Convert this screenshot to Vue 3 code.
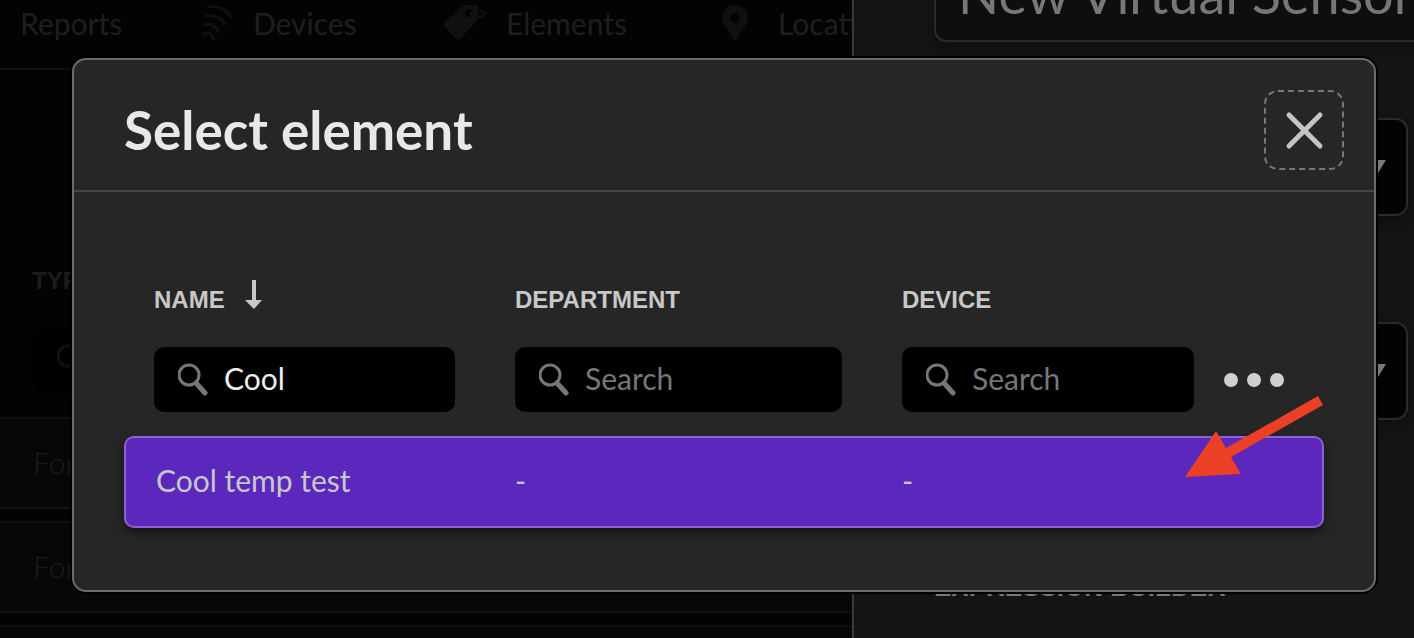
<script setup>
import { ref } from 'vue'

const filters = ref({ name: 'Cool', department: '', device: '' })
const columns = [
  { key: 'name', label: 'NAME', sorted: true },
  { key: 'department', label: 'DEPARTMENT' },
  { key: 'device', label: 'DEVICE' },
]
const rows = [{ name: 'Cool temp test', department: '-', device: '-' }]
const sensorName = ref('New Virtual Sensor')
const typeFilter = ref('')
</script>

<template>
  <div class="screen">
    <main class="main">
      <nav class="nav">
        <a href="#" class="reports">Reports</a>
        <a href="#" class="devices">
          <svg width="32" height="38" viewBox="0 0 32 38" fill="none" stroke="currentColor" stroke-width="3">
            <path d="M6 3c10-2 20 2 24 11M4 12c9-2 17 2 20 9M2 21c7-2 14 1 16 8M2 31c5-4 11-1 10 5" />
          </svg>
          Devices
        </a>
        <a href="#" class="elements">
          <svg width="42" height="36" viewBox="0 0 42 36">
            <path fill="currentColor" fill-rule="evenodd" d="M18 1.500Q20 0 22 0h10q2 0 2 2v11q0 2-2 4L17 33q-3 2-6 0L1 22q-2-3 0-5zM25 4a4 4 0 1 0 0 8a4 4 0 0 0 0-8z" />
            <ellipse cx="34" cy="9" rx="7" ry="3" fill="none" stroke="currentColor" stroke-width="2" />
          </svg>
          Elements
        </a>
        <a href="#" class="locations">
          <svg width="26" height="38" viewBox="0 0 26 38">
            <path fill="currentColor" fill-rule="evenodd" d="M13 1C6 1 0 6 0 13c0 8 7 13 11 22q2 4 4 0c4-9 11-14 11-22C26 6 20 1 13 1zm0 8a5 5 0 1 1 0 10a5 5 0 0 1 0-10z" />
          </svg>
          Locations
        </a>
      </nav>
      <section class="list">
        <label class="heading" for="type-filter">TYPE</label>
        <div class="search">
          <svg width="30" height="33" viewBox="0 0 30 33" fill="none" stroke="currentColor">
            <circle cx="11" cy="12" r="10" stroke-width="3" />
            <path d="M18 20l9 10" stroke-width="5" stroke-linecap="round" />
          </svg>
          <input id="type-filter" v-model="typeFilter" type="text" />
        </div>
        <ul>
          <li>Form</li>
          <li>Form</li>
          <li></li>
        </ul>
      </section>
    </main>

    <aside class="drawer">
      <input v-model="sensorName" class="sensor-name" type="text" aria-label="Sensor name" />
      <div v-for="n in 2" :key="n" class="picker">
        <select :aria-label="'Option ' + n"><option></option></select>
        <svg width="22" height="18" viewBox="0 0 22 18"><path d="M0 0h22L11 18z" fill="currentColor" /></svg>
      </div>
      <h2 class="heading">EXPRESSION BUILDER</h2>
    </aside>

    <div class="overlay">
      <section class="modal" role="dialog" aria-labelledby="dialog-title">
        <header>
          <h1 id="dialog-title">Select element</h1>
          <button class="close" type="button" aria-label="Close">
            <svg width="40" height="40" viewBox="0 0 40 40" fill="none" stroke="currentColor" stroke-width="5" stroke-linecap="round">
              <path d="M5 5l31 31M36 5L5 36" />
            </svg>
          </button>
        </header>
        <div class="content">
          <table>
            <colgroup>
              <col class="col-name" /><col class="col-department" /><col class="col-device" /><col class="col-more" />
            </colgroup>
            <thead>
              <tr>
                <th v-for="column in columns" :key="column.key" scope="col">
                  <label class="heading" :for="'filter-' + column.key">
                    {{ column.label }}
                    <svg v-if="column.sorted" class="sort" width="18" height="30" viewBox="0 0 18 30" fill="currentColor">
                      <path d="M7 0h4v20h6L9 29 0 20h7z" />
                    </svg>
                  </label>
                  <div class="search">
                    <svg width="30" height="33" viewBox="0 0 30 33" fill="none" stroke="currentColor">
                      <circle cx="11" cy="12" r="10" stroke-width="3" />
                      <path d="M18 20l9 10" stroke-width="5" stroke-linecap="round" />
                    </svg>
                    <input :id="'filter-' + column.key" v-model="filters[column.key]" type="text" placeholder="Search" />
                  </div>
                </th>
                <td class="more-cell">
                  <button class="more" type="button" aria-label="More filters"><i></i><i></i><i></i></button>
                </td>
              </tr>
            </thead>
            <tbody>
              <tr v-for="row in rows" :key="row.name">
                <td>{{ row.name }}</td>
                <td>{{ row.department }}</td>
                <td>{{ row.device }}</td>
                <td></td>
              </tr>
            </tbody>
          </table>
        </div>
        <svg class="pointer" width="138" height="81" viewBox="0 0 138 81">
          <path d="M0 81L31 35l10 17L133 0l5 9L46 61l10 17z" fill="#eb4026" />
        </svg>
      </section>
    </div>
  </div>
</template>

<style>
body {
  background: #030303;
}
</style>

<style scoped>
* {
  box-sizing: border-box;
}

.screen {
  position: relative;
  display: grid;
  grid-template-columns: minmax(0, 1fr) 562px;
  height: 100vh;
  overflow: hidden;
  background: #030303;
  font-family: Lato, "Open Sans", sans-serif;
  font-size: 30px;
}

input,
select,
button {
  font: inherit;
  color: inherit;
}

h1,
h2,
ul {
  margin: 0;
  padding: 0;
}

svg {
  display: block;
  flex: none;
}

.heading {
  font-family: "Liberation Sans Narrow", "Liberation Sans", sans-serif;
  font-size: 24px;
  font-weight: 700;
  line-height: 48px;
}

.main {
  overflow: hidden;
  color: #1c1c1c;
}

.nav {
  display: flex;
  height: 70px;
  padding: 0 0 22px 20px;
  border-bottom: 2px solid #101010;
}

.nav a {
  display: flex;
  flex: none;
  align-items: center;
  color: #1e1e1e;
  text-decoration: none;
}

.nav svg {
  color: #101010;
}

.reports {
  width: 181px;
}

.devices {
  width: 243px;
  gap: 20px;
}

.elements {
  width: 278px;
  gap: 20px;
}

.locations {
  gap: 30px;
}

.list {
  padding-top: 187px;
}

.list .heading {
  display: block;
  padding-left: 32px;
}

.list .search {
  width: 300px;
  margin: 23px 0 24px 33px;
  background: #000;
  color: #101010;
}

.list li {
  height: 92px;
  margin-bottom: 12px;
  padding-left: 33px;
  border: solid #101010;
  border-width: 2px 0;
  background: #070707;
  font-weight: 300;
  line-height: 86px;
  list-style: none;
}

.search {
  display: flex;
  align-items: center;
  gap: 16px;
  height: 65px;
  padding-left: 24px;
  border-radius: 10px;
  background: #000;
  color: #777;
}

.search input {
  flex: 1;
  min-width: 0;
  height: 100%;
  padding: 0 0 4px;
  border: 0;
  outline: 0;
  background: transparent;
  color: #eee;
}

.search input::placeholder {
  color: #777;
  opacity: 1;
}

.drawer {
  padding: 0 6px 0 80px;
  overflow: hidden;
  border-left: 2px solid #3a3a3a;
  background: #141414;
  color: #777;
}

.sensor-name {
  display: block;
  width: calc(100% + 20px);
  height: 98px;
  margin: -56px 0 76px;
  padding: 0 22px;
  border: 2px solid #2a2a2a;
  border-radius: 12px;
  outline: 0;
  background: #0e0e0e;
  box-shadow: 0 6px 12px #0005;
  font-size: 54px;
}

.picker {
  display: flex;
  align-items: center;
  justify-content: flex-end;
  height: 98px;
  margin-bottom: 106px;
  padding-right: 20px;
  border: 2px solid #2a2a2a;
  border-radius: 12px;
  background: #030303;
  box-shadow: 0 6px 12px #0005;
}

.picker select {
  flex: 1;
  height: 100%;
  border: 0;
  background: transparent;
  appearance: none;
}

.picker svg {
  margin-top: 4px;
}

.drawer .heading {
  margin-top: 143px;
  font-size: 26px;
}

.overlay {
  position: absolute;
  inset: 0;
  padding: 58px 38px 46px 72px;
}

.modal {
  position: relative;
  border: 2px solid #6b6b6b;
  border-radius: 14px;
  background: #262626;
  box-shadow: 0 0 0 2px #000;
  color: #c8c8c8;
}

header {
  display: flex;
  align-items: center;
  justify-content: space-between;
  height: 132px;
  padding: 10px 30px 0 50px;
  border-bottom: 2px solid #454545;
}

h1 {
  color: #e8e8e8;
  font-size: 53px;
  font-weight: 700;
  line-height: 60px;
}

.close {
  display: grid;
  place-items: center;
  width: 80px;
  height: 80px;
  padding: 0;
  border: 2px dashed #777;
  border-radius: 14px;
  background: transparent;
  color: #c4c4c4;
}

.content {
  padding: 84px 50px 62px;
}

table {
  width: 100%;
  table-layout: fixed;
  border-spacing: 0;
}

.col-name {
  width: 361px;
}

.col-department {
  width: 387px;
}

.col-device {
  width: 352px;
}

.col-more {
  width: 100px;
}

th {
  padding: 0 30px 24px;
  font-weight: 400;
  text-align: left;
}

th .heading {
  display: flex;
  align-items: center;
  gap: 20px;
  height: 48px;
  margin-bottom: 23px;
}

.sort {
  margin-bottom: 10px;
}

.more-cell {
  padding: 0 0 24px;
  vertical-align: bottom;
}

.more {
  display: flex;
  align-items: center;
  gap: 9px;
  height: 65px;
  padding: 0;
  border: 0;
  background: transparent;
}

.more i {
  width: 14px;
  height: 14px;
  border-radius: 50%;
  background: #d0d0d0;
}

tbody tr {
  border-radius: 10px;
  box-shadow: 0 4px 10px #0008;
}

tbody td {
  height: 92px;
  padding: 0 30px 4px;
  border: solid #8b62d2;
  border-width: 2px 0;
  background: #5b27bd;
}

tbody td:first-child {
  border-left-width: 2px;
  border-radius: 10px 0 0 10px;
}

tbody td:last-child {
  border-right-width: 2px;
  border-radius: 0 10px 10px 0;
}

.pointer {
  position: absolute;
  right: 51px;
  bottom: 113px;
}
</style>
